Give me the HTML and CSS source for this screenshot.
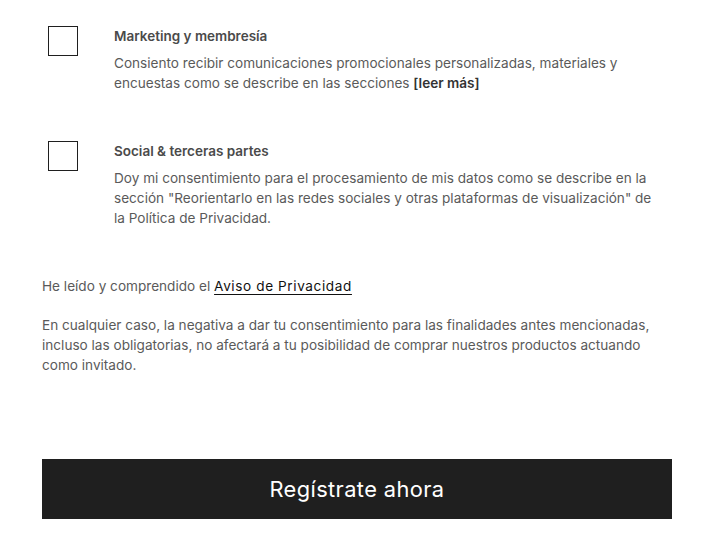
FILE: index.html
```html
<!DOCTYPE html>
<html lang="es">
<head>
    <meta charset="UTF-8">
    <meta name="viewport" content="width=device-width, initial-scale=1.0">
    <title>Registro</title>
    <link rel="stylesheet" href="styles.css">
</head>
<body>
    <div class="form">
        <label class="consent">
            <span class="checkbox"></span>
            <span class="consent-text">
                <span class="consent-title">Marketing y membresía</span>
                <span class="consent-body">Consiento recibir comunicaciones promocionales personalizadas, materiales y encuestas como se describe en las secciones <b>[leer más]</b></span>
            </span>
        </label>

        <label class="consent">
            <span class="checkbox"></span>
            <span class="consent-text">
                <span class="consent-title">Social &amp; terceras partes</span>
                <span class="consent-body">Doy mi consentimiento para el procesamiento de mis datos como se describe en la sección "Reorientarlo en las redes sociales y otras plataformas de visualización" de la Política de Privacidad.</span>
            </span>
        </label>

        <p class="notice">He leído y comprendido el <a href="#" class="notice-link">Aviso de Privacidad</a></p>

        <p class="disclaimer">En cualquier caso, la negativa a dar tu consentimiento para las finalidades antes mencionadas, incluso las obligatorias, no afectará a tu posibilidad de comprar nuestros productos actuando como invitado.</p>

        <button class="submit-button">Regístrate ahora</button>
    </div>
</body>
</html>
```

FILE: styles.css
```css
:root {
    --text: #5a5a5a;
    --dark: #1f1f1f;
}

body {
    margin: 0;
    padding: 0;
    font-family: 'Inter', 'Liberation Sans', sans-serif;
    background-color: #ffffff;
    color: var(--text);
}

.form {
    width: 630px;
    padding: 26px 0 0 42px;
    display: flex;
    flex-direction: column;
}

.consent {
    display: flex;
    gap: 36px;
    padding-left: 6px;
    cursor: pointer;
}

.consent + .consent {
    margin-top: 48px;
}

.checkbox {
    flex: none;
    width: 28px;
    height: 28px;
    border: 1px solid var(--dark);
    background: #fff;
}

.consent-text {
    display: flex;
    flex-direction: column;
    gap: 7px;
    max-width: 540px;
}

.consent-title {
    font-size: 13.5px;
    font-weight: 600;
    line-height: 20px;
    color: #4a4a4a;
}

.consent-body {
    font-size: 13.6px;
    line-height: 20px;
}

.consent-body b {
    font-weight: 600;
    color: #333;
}

.notice {
    margin: 48px 0 0;
    font-size: 13.6px;
    line-height: 20px;
}

.notice-link {
    color: #111;
    letter-spacing: 0.6px;
    text-decoration: underline;
    text-underline-offset: 3px;
}

.disclaimer {
    margin: 19px 0 0;
    font-size: 13.6px;
    line-height: 20px;
}

.submit-button {
    margin-top: 84px;
    height: 60px;
    border: none;
    background-color: var(--dark);
    color: #fff;
    font-family: inherit;
    font-size: 21.8px;
    letter-spacing: 0.4px;
    cursor: pointer;
}
```
